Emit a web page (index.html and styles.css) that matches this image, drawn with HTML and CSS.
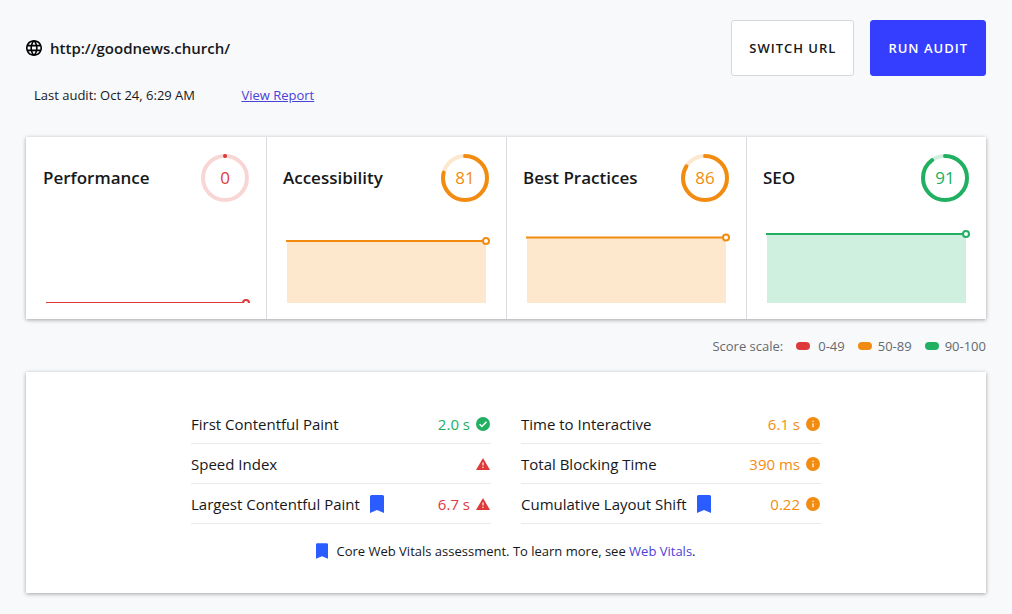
FILE: index.html
```
<!DOCTYPE html>
<html lang="en">
<head>
    <meta charset="UTF-8">
    <meta name="viewport" content="width=device-width, initial-scale=1.0">
    <title>Site audit</title>
    <link rel="stylesheet" href="styles.css">
</head>
<body>
    <!-- shared icons -->
    <svg class="sprite" aria-hidden="true">
        <symbol id="globe" viewBox="2 2 20 20"><path d="M11.99 2C6.47 2 2 6.48 2 12s4.47 10 9.99 10C17.52 22 22 17.52 22 12S17.52 2 11.99 2zm6.93 6h-2.95c-.32-1.25-.78-2.45-1.38-3.56 1.84.63 3.37 1.91 4.33 3.56zM12 4.04c.83 1.2 1.48 2.53 1.91 3.96h-3.82c.43-1.43 1.08-2.76 1.91-3.96zM4.26 14C4.1 13.36 4 12.69 4 12s.1-1.36.26-2h3.38c-.08.66-.14 1.32-.14 2s.06 1.34.14 2H4.26zm.82 2h2.95c.32 1.25.78 2.45 1.38 3.56-1.84-.63-3.37-1.9-4.33-3.56zm2.95-8H5.08c.96-1.66 2.49-2.93 4.33-3.56C8.81 5.55 8.35 6.75 8.03 8zM12 19.96c-.83-1.2-1.48-2.53-1.91-3.96h3.82c-.43 1.43-1.08 2.76-1.91 3.96zM14.34 14H9.66c-.09-.66-.16-1.32-.16-2s.07-1.35.16-2h4.68c.09.65.16 1.32.16 2s-.07 1.34-.16 2zm.25 5.56c.6-1.11 1.06-2.31 1.38-3.56h2.95c-.96 1.65-2.49 2.93-4.33 3.56zM16.36 14c.08-.66.14-1.32.14-2s-.06-1.34-.14-2h3.38c.16.64.26 1.31.26 2s-.1 1.36-.26 2h-3.38z"/></symbol>
        <symbol id="bookmark" viewBox="0 0 14 18"><path d="M1.500 0h11A1.500 1.500 0 0 1 14 1.500V18l-7-3-7 3V1.500A1.500 1.500 0 0 1 1.500 0z"/></symbol>
        <symbol id="check" viewBox="0 0 14 14"><circle cx="7" cy="7" r="7"/><path d="M3.600 7.200l2.300 2.300 4.600-4.700" fill="none" stroke="#fff" stroke-width="1.500"/></symbol>
        <symbol id="info" viewBox="0 0 14 14"><circle cx="7" cy="7" r="7"/><path d="M6.300 3.700h1.400v1.300H6.300zM6.300 6.200h1.400v4H6.300z" fill="#fff" opacity=".85"/></symbol>
        <symbol id="warning" viewBox="0 0 14 14"><path d="M7 1l7 12H0z"/><path d="M6.300 5.500h1.400v3H6.300zM6.300 9.800h1.400v1.300H6.300z" fill="#fff" opacity=".85"/></symbol>
    </svg>

    <header class="header">
        <div>
            <h1 class="url"><svg class="url-icon"><use href="#globe"/></svg>http://goodnews.church/</h1>
            <p class="audit">Last audit: Oct 24, 6:29 AM <a class="report" href="#">View Report</a></p>
        </div>
        <div class="actions">
            <button class="btn" type="button">SWITCH URL</button>
            <button class="btn btn-primary" type="button">RUN AUDIT</button>
        </div>
    </header>

    <main>
        <section class="scores">
            <article class="score bad">
                <div class="score-head">
                    <h2>Performance</h2>
                    <div class="gauge">
                        <svg viewBox="0 0 48 48"><circle class="track" cx="24" cy="24" r="22"/><circle class="ring" cx="24" cy="24" r="22" pathLength="100" stroke-dasharray="0.1 100"/></svg>
                        <span>0</span>
                    </div>
                </div>
                <svg class="chart" viewBox="0 0 207 80"><path class="line" d="M3 80H203"/><circle class="dot" cx="203" cy="80" r="3"/></svg>
            </article>
            <article class="score average">
                <div class="score-head">
                    <h2>Accessibility</h2>
                    <div class="gauge">
                        <svg viewBox="0 0 48 48"><circle class="track" cx="24" cy="24" r="22"/><circle class="ring" cx="24" cy="24" r="22" pathLength="100" stroke-dasharray="79 100"/></svg>
                        <span>81</span>
                    </div>
                </div>
                <svg class="chart" viewBox="0 0 207 80"><path class="area" d="M4 18H203V80H4z"/><path class="line" d="M3 18H203"/><circle class="dot" cx="203" cy="18" r="3"/></svg>
            </article>
            <article class="score average">
                <div class="score-head">
                    <h2>Best Practices</h2>
                    <div class="gauge">
                        <svg viewBox="0 0 48 48"><circle class="track" cx="24" cy="24" r="22"/><circle class="ring" cx="24" cy="24" r="22" pathLength="100" stroke-dasharray="84 100"/></svg>
                        <span>86</span>
                    </div>
                </div>
                <svg class="chart" viewBox="0 0 207 80"><path class="area" d="M4 14.500H203V80H4z"/><path class="line" d="M3 14.500H203"/><circle class="dot" cx="203" cy="14.500" r="3"/></svg>
            </article>
            <article class="score good">
                <div class="score-head">
                    <h2>SEO</h2>
                    <div class="gauge">
                        <svg viewBox="0 0 48 48"><circle class="track" cx="24" cy="24" r="22"/><circle class="ring" cx="24" cy="24" r="22" pathLength="100" stroke-dasharray="90 100"/></svg>
                        <span>91</span>
                    </div>
                </div>
                <svg class="chart" viewBox="0 0 207 80"><path class="area" d="M4 11H203V80H4z"/><path class="line" d="M3 11H203"/><circle class="dot" cx="203" cy="11" r="3"/></svg>
            </article>
        </section>

        <div class="scale">
            <span>Score scale:</span>
            <span class="range bad">0-49</span>
            <span class="range average">50-89</span>
            <span class="range good">90-100</span>
        </div>

        <section class="vitals">
            <dl class="metrics">
                <div class="metric">
                    <dt>First Contentful Paint</dt>
                    <dd class="good">2.0 s <svg><use href="#check"/></svg></dd>
                </div>
                <div class="metric">
                    <dt>Time to Interactive</dt>
                    <dd class="average">6.1 s <svg><use href="#info"/></svg></dd>
                </div>
                <div class="metric">
                    <dt>Speed Index</dt>
                    <dd class="bad"><svg><use href="#warning"/></svg></dd>
                </div>
                <div class="metric">
                    <dt>Total Blocking Time</dt>
                    <dd class="average">390 ms <svg><use href="#info"/></svg></dd>
                </div>
                <div class="metric">
                    <dt>Largest Contentful Paint <svg class="bookmark"><use href="#bookmark"/></svg></dt>
                    <dd class="bad">6.7 s <svg><use href="#warning"/></svg></dd>
                </div>
                <div class="metric">
                    <dt>Cumulative Layout Shift <svg class="bookmark"><use href="#bookmark"/></svg></dt>
                    <dd class="average">0.22 <svg><use href="#info"/></svg></dd>
                </div>
            </dl>
            <p class="note">
                <svg class="bookmark bookmark-small"><use href="#bookmark"/></svg>
                <span>Core Web Vitals assessment. To learn more, see <a href="#">Web Vitals</a>.</span>
            </p>
        </section>
    </main>
</body>
</html>
```
FILE: styles.css
```
* {
    box-sizing: border-box;
}
body {
    margin: 0;
    padding: 20px 26px;
    font-family: "Segoe UI", "Open Sans", sans-serif;
    font-size: 13px;
    line-height: 20px;
    color: #16181a;
    background-color: #f8f9fb;
}
h1, h2, p, dl, dd {
    margin: 0;
}
a {
    color: #4a41d8;
}
.sprite {
    position: absolute;
    width: 0;
    height: 0;
}
.bad {
    color: #de3a3a;
    --tint: #f9d6d6;
}
.average {
    color: #f28c11;
    --tint: #fde7cd;
}
.good {
    color: #21b062;
    --tint: #d0f0df;
}

/* header */
.header {
    display: flex;
    justify-content: space-between;
    margin-bottom: 32px;
}
.url {
    display: flex;
    align-items: center;
    gap: 8px;
    height: 56px;
    font-size: 15px;
    font-weight: 600;
}
.url-icon {
    width: 16px;
    height: 16px;
}
.audit {
    padding: 9px 8px 0;
}
.report {
    margin-left: 43px;
}
.actions {
    display: flex;
    align-items: flex-start;
    gap: 16px;
}
.btn {
    height: 56px;
    padding: 0 17px;
    border: 1px solid #d5d9de;
    border-radius: 3px;
    background-color: #fff;
    color: #16181a;
    font: 600 13px "Segoe UI", "Open Sans", sans-serif;
    letter-spacing: 1px;
    cursor: pointer;
}
.btn-primary {
    border-color: #353eff;
    background-color: #353eff;
    color: #fff;
}

/* score cards */
.scores, .vitals {
    background-color: #fff;
    box-shadow: 0 1px 4px rgba(0, 0, 0, 0.35);
}
.scores {
    display: grid;
    grid-template-columns: repeat(4, 1fr);
}
.score {
    padding: 17px 16px 16px;
    border-left: 1px solid #d9dce0;
}
.score:first-child {
    border-left-color: transparent;
}
.score-head {
    display: flex;
    align-items: center;
    justify-content: space-between;
    margin-bottom: 21px;
}
.score h2 {
    font-size: 17px;
    font-weight: 600;
    color: #16181a;
}
.gauge {
    display: grid;
    place-items: center;
    width: 48px;
    height: 48px;
    margin-right: 1px;
    font-size: 17px;
}
.gauge svg, .gauge span {
    grid-area: 1 / 1;
}
.gauge svg {
    width: 48px;
    height: 48px;
    transform: rotate(-90deg);
}
.gauge circle {
    fill: none;
    stroke-width: 4;
}
.track {
    stroke: var(--tint);
}
.ring {
    stroke: currentColor;
    stroke-linecap: round;
}
.chart {
    display: block;
    width: 100%;
}
.area {
    fill: var(--tint);
}
.line {
    stroke: currentColor;
    stroke-width: 2;
}
.dot {
    fill: #fff;
    stroke: currentColor;
    stroke-width: 2;
}

/* legend */
.scale {
    display: flex;
    justify-content: flex-end;
    gap: 13px;
    padding: 17px 0 16px;
    color: #65696e;
}
.range {
    display: flex;
    align-items: center;
    gap: 6px;
    color: #65696e;
}
.range.bad {
    gap: 8px;
}
.range::before {
    content: "";
    width: 14px;
    height: 8px;
    border-radius: 4px;
    background-color: #de3a3a;
}
.range.average::before {
    background-color: #f28c11;
}
.range.good::before {
    background-color: #21b062;
}

/* web vitals */
.vitals {
    padding: 32px;
}
.metrics {
    display: grid;
    grid-template-columns: 1fr 1fr;
    column-gap: 30px;
    max-width: 630px;
    margin: 0 auto;
    font-size: 15px;
}
.metric {
    display: flex;
    align-items: center;
    justify-content: space-between;
    height: 40px;
    border-bottom: 1px solid #e8eaec;
}
dt, dd {
    display: flex;
    align-items: center;
}
dd {
    gap: 6px;
    padding-right: 1px;
}
dt {
    gap: 10px;
}
dd svg {
    width: 14px;
    height: 14px;
    fill: currentColor;
}
.bookmark {
    width: 14px;
    height: 18px;
    fill: #2b5cff;
}
.bookmark-small {
    width: 12px;
    height: 16px;
}
.note {
    display: flex;
    align-items: center;
    justify-content: center;
    gap: 8px;
    padding-top: 17px;
}
.note a {
    text-decoration: none;
}
```
